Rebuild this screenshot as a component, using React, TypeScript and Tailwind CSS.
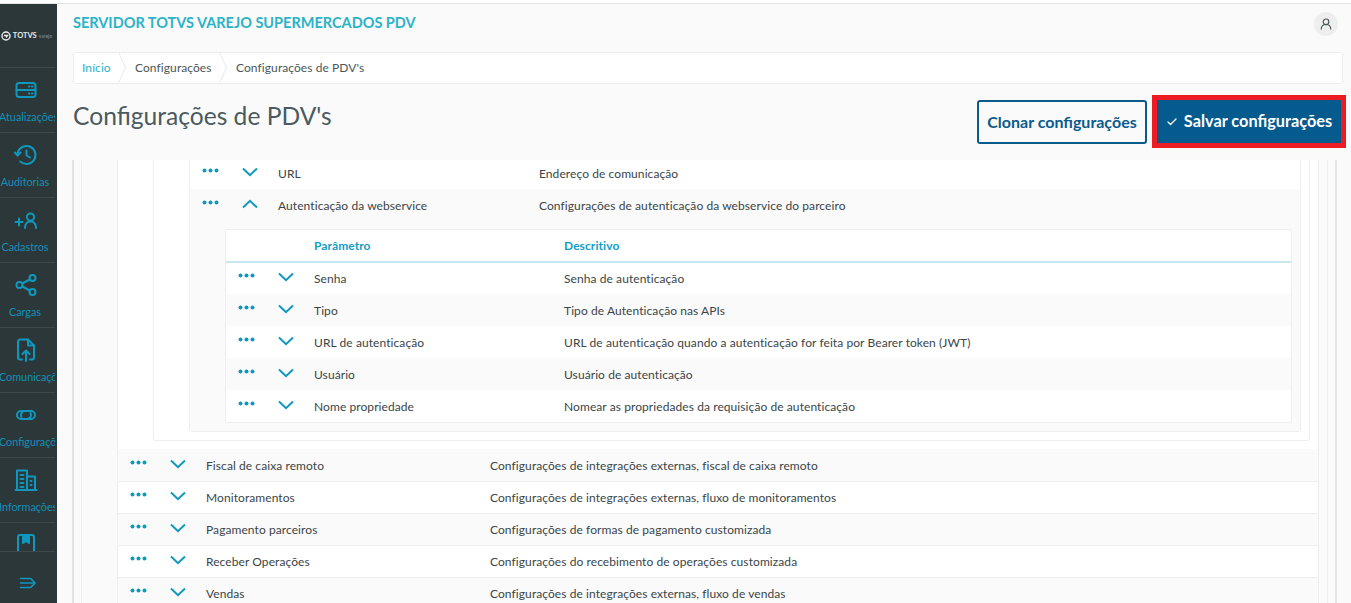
import React from 'react';
import { Check } from 'lucide-react';

const font = "font-['Lato','Noto_Sans',sans-serif]";

const Icon: React.FC<{ children: React.ReactNode; w?: number; h?: number }> = ({ children, w = 24, h = 24 }) => (
    <svg width={w} height={h} viewBox="0 0 24 24" fill="none" stroke="#0f98bd" strokeWidth="2" strokeLinecap="round" strokeLinejoin="round">
        {children}
    </svg>
);

const navItems = [
    {
        label: 'Atualizações',
        icon: (
            <>
                <rect x="2.500" y="5" width="19" height="14" rx="2.500" />
                <path d="M2.500 12h19M15 8.500h.5M18 8.500h.5M15 15.500h.5M18 15.500h.5" />
            </>
        ),
    },
    {
        label: 'Auditorias',
        icon: (
            <>
                <path d="M3.500 12a9 9 0 1 1 2.800 6.500" />
                <path d="M1 9.500l2.500 3 3-3" />
                <path d="M12.500 7.500v5l3.500 2" />
            </>
        ),
    },
    {
        label: 'Cadastros',
        icon: (
            <>
                <path d="M1.500 14h7M5 10.500v7" />
                <circle cx="16.500" cy="9" r="3.600" />
                <path d="M11 20c0-4 2.300-6.500 5.500-6.500s5.500 2.500 5.500 6.500" />
            </>
        ),
    },
    {
        label: 'Cargas',
        icon: (
            <>
                <circle cx="18.500" cy="5" r="3" />
                <circle cx="5.500" cy="12" r="3" />
                <circle cx="18.500" cy="19" r="3" />
                <path d="M8.200 10.500l7.600-4M8.200 13.500l7.600 4" />
            </>
        ),
    },
    {
        label: 'Comunicações',
        icon: (
            <>
                <path d="M8 21.500H6a2 2 0 0 1-2-2V3.500a2 2 0 0 1 2-2h8l6 6v12a2 2 0 0 1-2 2h-2" />
                <path d="M14 1.500v6h6" />
                <path d="M12 23v-10M8.500 16l3.500-3.500 3.500 3.500" />
            </>
        ),
    },
    {
        label: 'Configurações',
        icon: (
            <>
                <path d="M11 8H7a4 4 0 0 0 0 8h6a4 4 0 0 0 3.500-6" />
                <path d="M13 16h4a4 4 0 0 0 0-8h-6a4 4 0 0 0-3.500 6" />
            </>
        ),
    },
    {
        label: 'Informações',
        icon: (
            <>
                <path d="M3 22V2.500h10V22M13 8.500h8V22M1.500 22h21" />
                <path d="M6.500 7h3M6.500 11h3M6.500 15h3M6.500 19h3M16.500 13h1M16.500 17h1" />
            </>
        ),
    },
    {
        label: 'Manuais',
        icon: (
            <>
                <path d="M4 22V4a2 2 0 0 1 2-2h12a2 2 0 0 1 2 2v18z" />
                <path d="M9 2v8l3-2 3 2V2" fill="#0f98bd" />
            </>
        ),
    },
];

const Dots = () => (
    <svg width="17" height="5" viewBox="0 0 17 5" fill="#0f98bd" className="block">
        <circle cx="2.500" cy="2.500" r="2" />
        <circle cx="8.500" cy="2.500" r="2" />
        <circle cx="14.500" cy="2.500" r="2" />
    </svg>
);

const Chevron: React.FC<{ up?: boolean }> = ({ up }) => (
    <svg width="16" height="10" viewBox="0 0 16 10" fill="none" stroke="#0f98bd" strokeWidth="2" className="block">
        <path d={up ? 'M1 8.500L8 1.800l7 6.700' : 'M1 1.500l7 6.700 7-6.700'} />
    </svg>
);

interface RowProps {
    name: string;
    desc: string;
    nameClass: string;
    rowClass: string;
    up?: boolean;
}

const Row: React.FC<RowProps> = ({ name, desc, nameClass, rowClass, up }) => (
    <div className={`flex text-[12px] leading-[16px] text-[#3a4547] tracking-[0.08px] ${rowClass}`}>
        <div className="w-[12px] shrink-0" />
        <div className="w-[17px] shrink-0 mt-[2px]"><Dots /></div>
        <div className="w-[23px] shrink-0" />
        <div className="w-[16px] shrink-0 mt-[1px]"><Chevron up={up} /></div>
        <div className="w-[20px] shrink-0" />
        <div className={`shrink-0 ${nameClass}`}>{name}</div>
        <div>{desc}</div>
    </div>
);

const innerRows = [
    ['Senha', 'Senha de autenticação', 'bg-transparent'],
    ['Tipo', 'Tipo de Autenticação nas APIs', 'bg-[#fafafa]'],
    ['URL de autenticação', 'URL de autenticação quando a autenticação for feita por Bearer token (JWT)', 'bg-white'],
    ['Usuário', 'Usuário de autenticação', 'bg-[#fafafa]'],
    ['Nome propriedade', 'Nomear as propriedades da requisição de autenticação', 'bg-white'],
];

const outerRows = [
    ['Fiscal de caixa remoto', 'Configurações de integrações externas, fiscal de caixa remoto', 'bg-[#fafafa]'],
    ['Monitoramentos', 'Configurações de integrações externas, fluxo de monitoramentos', 'bg-white'],
    ['Pagamento parceiros', 'Configurações de formas de pagamento customizada', 'bg-[#fafafa]'],
    ['Receber Operações', 'Configurações do recebimento de operações customizada', 'bg-white'],
    ['Vendas', 'Configurações de integrações externas, fluxo de vendas', 'bg-[#fafafa]'],
];

const App: React.FC = () => {
    return (
        <div className={`h-[603px] w-[1351px] overflow-hidden flex flex-col bg-white ${font}`}>
            <div className="h-[4px] shrink-0 border-b border-[#e2e2e2]" />
            <div className="flex flex-1 min-h-0">
                {/* Sidebar */}
                <aside className="w-[57px] shrink-0 bg-[#2c3739] flex flex-col">
                    <div className="h-[64px] shrink-0 mr-[2px] border-b border-[#3d484a] flex items-center justify-center gap-[2px] pr-[2px] pt-[1px]">
                        <svg width="10" height="10" viewBox="0 0 10 10" fill="none" stroke="#e8eded" strokeWidth="1.400" className="shrink-0">
                            <circle cx="5" cy="5" r="4" />
                            <path d="M3 4.500h3.500L5 6.500" />
                        </svg>
                        <span className="text-[7.5px] font-bold text-[#e8eded] leading-none">TOTVS</span>
                        <span className="text-[5px] text-[#8a9496] leading-none">varejo</span>
                    </div>
                    <div className="flex-1 min-h-0 overflow-hidden">
                        {navItems.map((item) => (
                            <div key={item.label} className="w-[55px] h-[65px] border-b border-[#3d484a] overflow-hidden flex flex-col items-center pt-[10px] pr-[4px]">
                                <div className="h-[24px] shrink-0"><Icon>{item.icon}</Icon></div>
                                <div className="mt-[8px] self-start -ml-[1px] w-[52px] text-center text-[10.8px] leading-[14px] text-[#1191b6] whitespace-nowrap">{item.label}</div>
                            </div>
                        ))}
                    </div>
                    <div className="h-[52px] shrink-0 mr-[2px] border-t border-[#3d484a] flex items-center justify-center pt-[10px]">
                        <Icon w={18} h={18}>
                            <path d="M2 6h13M2 12h19M2 18h13M16 6.500l5.500 5.500-5.500 5.500" />
                        </Icon>
                    </div>
                </aside>

                {/* Main */}
                <main className="flex-1 min-w-0 flex flex-col bg-[#fafafa]">
                    <header className="h-[156px] shrink-0 pl-[16px] pr-[8px]">
                        <div className="h-[48px] flex items-center justify-between pb-[8px] pr-[5px]">
                            <h1 className="text-[14.5px] font-bold text-[#2bb3c7] pb-[3px]">SERVIDOR TOTVS VAREJO SUPERMERCADOS PDV</h1>
                            <div className="w-[24px] h-[24px] rounded-full bg-[#eeeeee] flex items-center justify-center">
                                <svg width="12" height="12" viewBox="0 0 12 12" fill="none" stroke="#4a5658" strokeWidth="1.200">
                                    <circle cx="6" cy="3.800" r="2.800" />
                                    <path d="M1.200 11.500c0-3 2-5 4.800-5s4.800 2 4.800 5" />
                                </svg>
                            </div>
                        </div>
                        <nav className="h-[32px] bg-white border border-[#eeeeee] rounded-[3px] flex items-center text-[12px] text-[#4a5658] tracking-[0.08px]">
                            <span className="ml-[8px] w-[36px] text-[#2bb3c7]">Início</span>
                            <svg width="8" height="32" viewBox="0 0 8 32" fill="none" stroke="#e8e8e8" className="shrink-0"><path d="M0.500 0l7 15.500-7 15.500" /></svg>
                            <span className="ml-[9px] w-[84px]">Configurações</span>
                            <svg width="8" height="32" viewBox="0 0 8 32" fill="none" stroke="#e8e8e8" className="shrink-0"><path d="M0.500 0l7 15.500-7 15.500" /></svg>
                            <span className="ml-[9px]">Configurações de PDV's</span>
                        </nav>
                        <div className="mt-[11px] flex items-start justify-between">
                            <h2 className="mt-[5px] text-[24.6px] leading-[32px] text-[#4b5a5e]">Configurações de PDV's</h2>
                            <div className="flex items-center gap-[5px] -mr-[3px]">
                                <button className="w-[170px] h-[44px] border-2 border-[#0b5a8c] rounded-[3px] bg-[#fafafa] text-[#0b5a8c] text-[16px] font-bold">Clonar configurações</button>
                                <div className="border-[5px] border-[#ed1c24]">
                                    <button className="w-[184px] h-[43px] bg-[#055a8e] text-white text-[16.3px] font-bold flex items-center justify-center gap-[6px]">
                                        <Check size={12} strokeWidth={2.5} />
                                        Salvar configurações
                                    </button>
                                </div>
                            </div>
                        </div>
                    </header>

                    {/* Nested parameter tables */}
                    <section className="flex-1 min-h-0 overflow-hidden pl-[15px] pr-[14px]">
                        <div className="bg-[#fafafa] border-l-2 border-r-2 border-[#e4e4e4] pl-[7px] pr-[7px] h-[600px]">
                            <div className="bg-[#fafafa] border-l border-r border-[#eeeeee] pl-[35px] pr-[8px] h-full">
                                <div className="bg-white border-l border-r border-[#eeeeee]">
                                    <div className="pl-[35px] pr-[8px]">
                                        <div className="border-l border-r border-b border-[#eeeeee] rounded-b-[3px] pl-[35px] pr-[8px] pb-[8px]">
                                            <div className="border-l border-r border-b border-[#eeeeee] rounded-b-[3px]">
                                                <Row name="URL" desc="Endereço de comunicação" nameClass="w-[261px]" rowClass="-mt-[3px] h-[32px] pt-[9px] bg-white" />
                                                <div className="bg-[#fafafa] pb-[8px]">
                                                    <Row name="Autenticação da webservice" desc="Configurações de autenticação da webservice do parceiro" nameClass="w-[261px]" rowClass="h-[40px] pt-[9px]" up />
                                                    <div className="ml-[35px] mr-[8px] border border-[#eeeeee] rounded-[2px] bg-white">
                                                        <div className="h-[33px] flex items-center border-b-2 border-[#c9e6ef] text-[12px] font-bold text-[#119ec4] tracking-[0.08px]">
                                                            <span className="ml-[88px] w-[250px]">Parâmetro</span>
                                                            <span>Descritivo</span>
                                                        </div>
                                                        <div className="-mt-[1px]">
                                                            {innerRows.map(([name, desc, bg]) => (
                                                                <Row key={name} name={name} desc={desc} nameClass="w-[250px]" rowClass={`h-[32px] pt-[9px] ${bg}`} />
                                                            ))}
                                                        </div>
                                                    </div>
                                                </div>
                                            </div>
                                        </div>
                                    </div>
                                    <div className="h-[8px]" />
                                    <div className="h-[1px] bg-[#fafafa]" />
                                    {outerRows.map(([name, desc, bg]) => (
                                        <Row key={name} name={name} desc={desc} nameClass="w-[284px]" rowClass={`h-[32px] pt-[8px] border-b border-[#eeeeee] ${bg}`} />
                                    ))}
                                </div>
                            </div>
                        </div>
                    </section>
                </main>
            </div>
        </div>
    );
};

export default App;
